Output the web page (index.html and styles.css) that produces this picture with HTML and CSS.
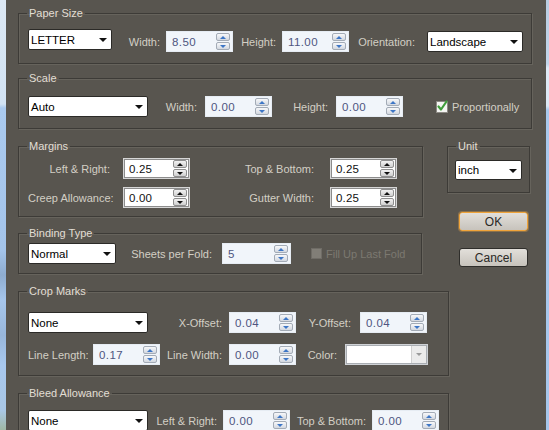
FILE: index.html
```html
<!DOCTYPE html>
<html>
<head>
<meta charset="utf-8">
<title>Page Setup</title>
<link rel="stylesheet" href="styles.css">
</head>
<body>
<div class="window">
  <div class="frame frame-l"></div>
  <main class="dialog">
    <fieldset class="group g-paper">
      <legend>Paper Size</legend>
      <div class="row r-paper">
        <div class="sel sel-raise"><span>LETTER</span></div>
        <span class="lbl">Width:</span>
        <div class="num"><span>8.50</span><div class="spin"><i class="up"></i><i class="dn"></i></div></div>
        <span class="lbl">Height:</span>
        <div class="num"><span>11.00</span><div class="spin"><i class="up"></i><i class="dn"></i></div></div>
        <span class="lbl lbl-wide">Orientation:</span>
        <div class="sel"><span>Landscape</span></div>
      </div>
    </fieldset>

    <fieldset class="group g-scale">
      <legend>Scale</legend>
      <div class="row r-scale">
        <div class="sel"><span>Auto</span></div>
        <span class="lbl lbl-8">Width:</span>
        <div class="num"><span>0.00</span><div class="spin"><i class="up"></i><i class="dn"></i></div></div>
        <span class="lbl lbl-8">Height:</span>
        <div class="num"><span>0.00</span><div class="spin"><i class="up"></i><i class="dn"></i></div></div>
        <span></span>
        <label class="check">
          <span class="box on"><svg width="13" height="13" viewBox="0 0 13 13"><path d="M2.5 6.5 L5 9.5 L10.5 1.5" fill="none" stroke="#3f9c3a" stroke-width="2.2" stroke-linecap="round" stroke-linejoin="round"/></svg></span>
          <span>Proportionally</span>
        </label>
      </div>
    </fieldset>

    <div class="middle">
      <div class="col-left">
        <fieldset class="group g-margins">
          <legend>Margins</legend>
          <div class="r-margins">
            <span class="lbl">Left &amp; Right:</span>
            <div class="num num-b"><span>0.25</span><div class="spin spin-b"><i class="up"></i><i class="dn"></i></div></div>
            <span class="lbl">Top &amp; Bottom:</span>
            <div class="num num-b"><span>0.25</span><div class="spin spin-b"><i class="up"></i><i class="dn"></i></div></div>
            <span class="lbl">Creep Allowance:</span>
            <div class="num num-b"><span>0.00</span><div class="spin spin-b"><i class="up"></i><i class="dn"></i></div></div>
            <span class="lbl">Gutter Width:</span>
            <div class="num num-b"><span>0.25</span><div class="spin spin-b"><i class="up"></i><i class="dn"></i></div></div>
          </div>
        </fieldset>

        <fieldset class="group g-binding">
          <legend>Binding Type</legend>
          <div class="row r-binding">
            <div class="sel"><span>Normal</span></div>
            <span class="lbl lbl-10">Sheets per Fold:</span>
            <div class="num"><span>5</span><div class="spin"><i class="up"></i><i class="dn"></i></div></div>
            <span></span>
            <label class="check disabled">
              <span class="box off"></span>
              <span>Fill Up Last Fold</span>
            </label>
          </div>
        </fieldset>
      </div>

      <div class="col-right">
        <fieldset class="group g-unit">
          <legend>Unit</legend>
          <div class="sel sel-unit"><span>inch</span></div>
        </fieldset>
        <button class="btn btn-ok">OK</button>
        <button class="btn btn-cancel">Cancel</button>
      </div>
    </div>

    <fieldset class="group g-crop">
      <legend>Crop Marks</legend>
      <div class="row r-crop1">
        <div class="sel"><span>None</span></div>
        <span class="lbl lbl-7">X-Offset:</span>
        <div class="num"><span>0.04</span><div class="spin"><i class="up"></i><i class="dn"></i></div></div>
        <span class="lbl lbl-9">Y-Offset:</span>
        <div class="num"><span>0.04</span><div class="spin"><i class="up"></i><i class="dn"></i></div></div>
      </div>
      <div class="row r-crop2">
        <span class="lbl lbl-8">Line Length:</span>
        <div class="num"><span>0.17</span><div class="spin"><i class="up"></i><i class="dn"></i></div></div>
        <span class="lbl lbl-7">Line Width:</span>
        <div class="num"><span>0.00</span><div class="spin"><i class="up"></i><i class="dn"></i></div></div>
        <span class="lbl lbl-8">Color:</span>
        <div class="color"><span class="swatch"></span><span class="drop"></span></div>
      </div>
    </fieldset>

    <fieldset class="group g-bleed">
      <legend>Bleed Allowance</legend>
      <div class="row r-bleed">
        <div class="sel"><span>None</span></div>
        <span class="lbl">Left &amp; Right:</span>
        <div class="num"><span>0.00</span><div class="spin"><i class="up"></i><i class="dn"></i></div></div>
        <span class="lbl">Top &amp; Bottom:</span>
        <div class="num"><span>0.00</span><div class="spin"><i class="up"></i><i class="dn"></i></div></div>
      </div>
    </fieldset>
  </main>
  <div class="frame frame-r"></div>
</div>
</body>
</html>
```

FILE: styles.css
```css
* { box-sizing: border-box; }

html, body {
  margin: 0;
  height: 100%;
  overflow: hidden;
}

body {
  font-family: "Liberation Sans", Arial, sans-serif;
  font-size: 11px;
  color: #d3cfc5;
  background: #58554f;
}

.window {
  display: flex;
  height: 430px;
}

.frame { flex: none; }

.frame-l {
  width: 6px;
  background: linear-gradient(to bottom,
    #dce8f4 0, #d2e3f3 104px, #aacaef 108px, #a4c4ea 250px,
    #8eaccf 275px, #a6c6ec 300px, #98b6da 335px, #a8c8ee 365px,
    #a9c7e6 410px, #9fb8a4 430px);
}

.frame-r {
  width: 5px;
  background: linear-gradient(to bottom,
    #b9cde2 0, #c2d5ea 64px, #dfeaf6 68px, #dce8f5 106px,
    #a9c9ee 110px, #a6c6ec 430px);
}

.dialog {
  flex: 1;
  padding: 6px 14px 0 12px;
  background: #58554f;
}

/* ---------- group boxes ---------- */
.group {
  margin: 0;
  min-width: 0;
  padding: 0 8px 0 9px;
  border: 1px solid #3d3b37;
  box-shadow: 1px 1px 0 #66635c, inset 1px 1px 0 #66635c;
}

.group legend {
  padding: 0 2px;
  margin-left: -1px;
  line-height: 14px;
  font-size: 11px;
  color: #e2ded4;
}

.g-paper   { padding-top: 9px;  padding-bottom: 11px; }
.g-scale   { margin-top: 7px;  padding-top: 11px; padding-bottom: 11px; }
.g-margins { padding-top: 5px;  padding-bottom: 8px; }
.g-binding { margin-top: 9px;  padding-top: 3px;  padding-bottom: 9px; width: 404px; }
.g-unit    { padding: 7px 7px 12px 7px; }
.g-unit legend { margin-left: 1px; }
.g-crop    { margin-top: 10px; padding-top: 14px; padding-bottom: 10px; width: 431px; }
.g-bleed   { margin-top: 10px; padding-top: 10px; padding-bottom: 10px; width: 431px; }

/* ---------- rows ---------- */
.row {
  display: grid;
  align-items: center;
  height: 21px;
}

.r-paper {
  grid-template-columns: 84px 54px 67px 49px 67px 78px 96px;
  height: 23px;
  align-items: end;
}

.r-paper .lbl { padding-bottom: 4px; }

.r-scale   { grid-template-columns: 120px 57px 67px 64px 67px 33px auto; }
.r-binding { grid-template-columns: 88px 106px 69px 20px auto; }
.r-crop1   { grid-template-columns: 120px 81px 67px 64px 67px; }
.r-crop2   { grid-template-columns: 65px 67px 69px 67px 49px 83px; margin-top: 11px; }
.r-bleed   { grid-template-columns: 120px 75px 67px 82px 67px; }

.r-margins {
  display: grid;
  grid-template-columns: 95px 67px 140px 67px;
  grid-auto-rows: 21px;
  row-gap: 8px;
  align-items: center;
}

.lbl {
  text-align: right;
  padding-right: 6px;
  white-space: nowrap;
}

.lbl-wide { padding-right: 12px; }
.lbl-7 { padding-right: 7px; }
.lbl-8 { padding-right: 8px; }
.lbl-9 { padding-right: 9px; }
.lbl-10 { padding-right: 10px; }

.r-margins .lbl { padding-right: 13px; }
.r-margins .lbl:nth-child(3),
.r-margins .lbl:nth-child(7) { padding-right: 16px; }

/* ---------- middle section ---------- */
.middle {
  display: flex;
  gap: 24px;
  margin-top: 10px;
}

.col-left { width: 405px; flex: none; }

.col-right {
  width: 83px;
  flex: none;
  display: flex;
  flex-direction: column;
}

/* ---------- select ---------- */
.sel {
  height: 21px;
  display: flex;
  align-items: center;
  justify-content: space-between;
  padding: 0 4px 0 2px;
  background: #fff;
  border: 1px solid #2b2a27;
  border-radius: 2px;
  color: #000;
  font-size: 11.5px;
}

.sel::after {
  content: "";
  border-left: 4px solid transparent;
  border-right: 4px solid transparent;
  border-top: 4px solid #111;
  margin-top: 1px;
}

.sel-raise { align-self: start; }
.sel-unit { width: 67px; height: 20px; }

/* ---------- numeric spinner field ---------- */
.num {
  height: 21px;
  display: flex;
  align-items: center;
  justify-content: space-between;
  padding-left: 5px;
  background: #f1f5fa;
  border: 1px solid #e6ecf3;
  color: #4e5580;
  font-size: 11.5px;
  letter-spacing: 0.4px;
}

.num-b {
  background: #fff;
  border: 1px solid #d6d6d6;
  box-shadow: inset 0 0 0 1px #8c8c8c;
  color: #111;
  letter-spacing: 0.2px;
}

.spin {
  display: flex;
  flex-direction: column;
  gap: 1px;
  width: 14px;
  height: 17px;
  margin-right: 2px;
}

.spin i {
  flex: 1;
  display: flex;
  align-items: center;
  justify-content: center;
  border: 1px solid #a3abb6;
  border-radius: 2px;
  background: linear-gradient(#f7f8fa, #d3d8e0);
}

.spin i::after {
  content: "";
  border-left: 3px solid transparent;
  border-right: 3px solid transparent;
}

.spin .up::after { border-bottom: 3px solid #3d76c6; }
.spin .dn::after { border-top: 3px solid #3d76c6; }

.spin-b i {
  border-color: #8e8e8e;
  background: linear-gradient(#f2f2f2, #cfcfcf);
}

.spin-b .up::after { border-bottom-color: #111; }
.spin-b .dn::after { border-top-color: #111; }

/* ---------- colour picker ---------- */
.color {
  height: 21px;
  display: flex;
  background: #fff;
  border: 1px solid #cfd2d6;
  box-shadow: inset 0 0 0 1px #a9adb2;
  padding: 1px;
}

.color .swatch { flex: 1; }

.color .drop {
  width: 15px;
  display: flex;
  align-items: center;
  justify-content: center;
  background: #ebebeb;
  border-left: 1px solid #d0d0d0;
}

.color .drop::after {
  content: "";
  border-left: 3px solid transparent;
  border-right: 3px solid transparent;
  border-top: 3px solid #9a9a9a;
}

/* ---------- checkbox ---------- */
.check {
  display: flex;
  align-items: center;
  gap: 4px;
  white-space: nowrap;
}

.box {
  position: relative;
  width: 12px;
  height: 12px;
  flex: none;
}

.box.on {
  background: #f4f4f2;
  border: 1px solid #8d8a84;
}

.box.on svg {
  position: absolute;
  left: -1px;
  top: -2px;
}

.box.off {
  width: 11px;
  height: 11px;
  background: #817e77;
  border: 1px solid #6f6c66;
}

.check.disabled { color: #7c7971; }

/* ---------- buttons ---------- */
.btn {
  width: 69px;
  height: 19px;
  margin-left: 12px;
  padding: 0;
  font-family: inherit;
  font-size: 12px;
  color: #2a2926;
  background: linear-gradient(#e2dfda, #c7c3bc);
  border: 1px solid #2f2e2b;
  border-radius: 3px;
}

.btn-ok {
  margin-top: 19px;
  border-color: #f0a43a;
  box-shadow: 0 0 0 1px rgba(240, 170, 70, 0.35);
}

.btn-cancel { margin-top: 17px; }
```
